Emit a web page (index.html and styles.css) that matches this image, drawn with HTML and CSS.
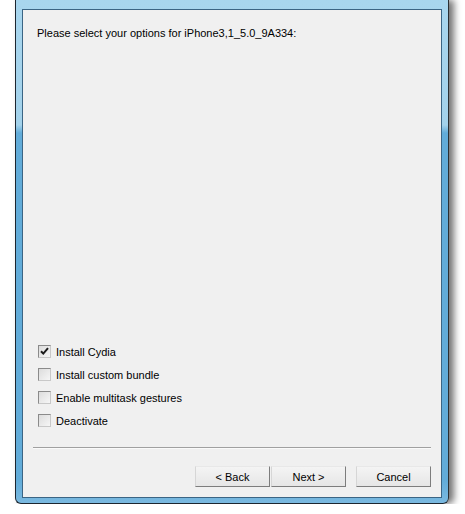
FILE: index.html
```html
<!DOCTYPE html>
<html>
<head>
<meta charset="utf-8">
<link rel="stylesheet" href="styles.css">
</head>
<body>
<div class="window">
  <div class="panel">
    <p class="prompt">Please select your options for iPhone3,1_5.0_9A334:</p>
    <div class="spacer"></div>
    <ul class="options">
      <li class="option"><span class="box checked"><svg viewBox="0 0 11 11" width="11" height="11"><path d="M2 5.2 L4.3 7.6 L9 2.2" fill="none" stroke="#1b1b1b" stroke-width="2"/></svg></span><span>Install Cydia</span></li>
      <li class="option"><span class="box"></span><span>Install custom bundle</span></li>
      <li class="option"><span class="box"></span><span>Enable multitask gestures</span></li>
      <li class="option"><span class="box"></span><span>Deactivate</span></li>
    </ul>
    <div class="separator"></div>
    <div class="buttons">
      <div class="pair">
        <button class="btn">&lt; Back</button>
        <button class="btn">Next &gt;</button>
      </div>
      <button class="btn">Cancel</button>
    </div>
  </div>
</div>
</body>
</html>
```

FILE: styles.css
```css
html, body {
  margin: 0;
  padding: 0;
  background: #ffffff;
}
body {
  font-family: "Liberation Sans", Arial, sans-serif;
  font-size: 11px;
  color: #000;
}
.window {
  margin-left: 15px;
  width: 434px;
  height: 504px;
  border-left: 1px solid #1c2630;
  border-right: 1px solid #2a2f33;
  border-bottom: 1px solid #1c2630;
  border-radius: 0 0 6px 6px;
  padding: 9px 6px 5px 6px;
  box-sizing: border-box;
  background: linear-gradient(to bottom, #a8d6ee 0, #a3d2eb 125px, #62acd9 133px, #62acd9 480px, #7ab9e0 100%);
  box-shadow: 5px 0 7px rgba(0, 0, 0, 0.55);
  display: flex;
}
.panel {
  flex: 1;
  background: #f0f0f0;
  border: 1px solid #3b6584;
  display: flex;
  flex-direction: column;
  padding: 0 10px 10px 10px;
}
.prompt {
  margin: 0;
  padding: 17px 0 0 4px;
  line-height: 13px;
}
.spacer {
  flex: 1;
}
.options {
  list-style: none;
  margin: 0;
  padding: 0 0 0 5px;
}
.option {
  height: 23px;
  display: flex;
  align-items: center;
  gap: 5px;
}
.box {
  width: 11px;
  height: 11px;
  border: 1px solid #8a8a8a;
  border-right-color: #c8c8c8;
  border-bottom-color: #c8c8c8;
  background: linear-gradient(135deg, #dcdcdc, #f6f6f6);
  display: flex;
  align-items: center;
  justify-content: center;
}
.box svg {
  display: block;
}
.separator {
  margin: 15px 0 17px 0;
  height: 1px;
  background: #a0a0a0;
  border-bottom: 1px solid #fafafa;
}
.buttons {
  display: flex;
  justify-content: flex-end;
  gap: 10px;
}
.pair {
  display: flex;
  gap: 1px;
}
.btn {
  width: 75px;
  height: 21px;
  font-family: "Liberation Sans", Arial, sans-serif;
  font-size: 11px;
  color: #000;
  background: linear-gradient(to bottom, #f4f4f4, #e6e6e6);
  border: 1px solid;
  border-color: #e8e8e8 #7d7d7d #7d7d7d #d6d6d6;
  padding: 0;
}
```
